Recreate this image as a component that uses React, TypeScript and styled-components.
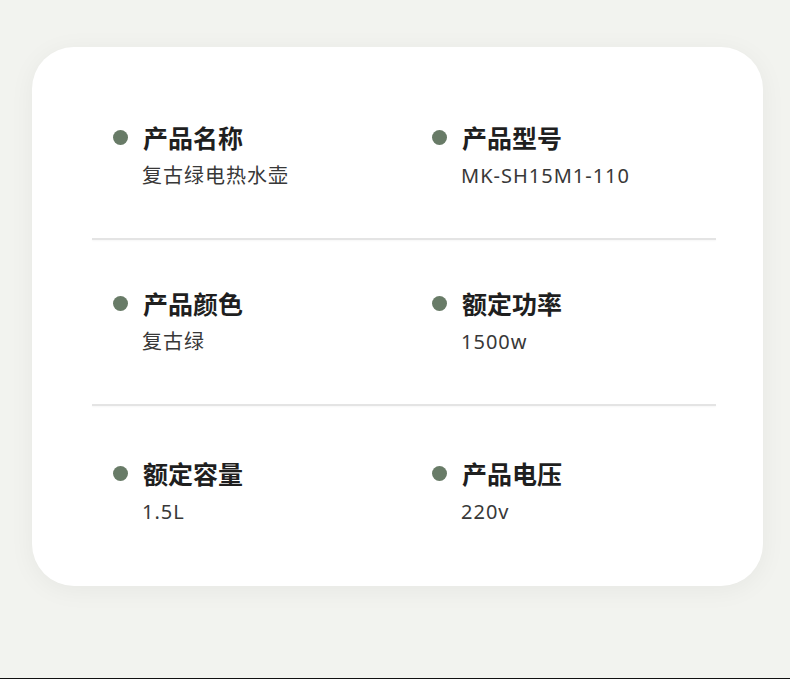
import React from "react";
import styled, { createGlobalStyle } from "styled-components";

const GlobalStyle = createGlobalStyle`
  * {
    box-sizing: border-box;
  }
  body {
    margin: 0;
    background-color: #f2f3ef;
    font-family: "Noto Sans CJK SC", "Noto Sans", sans-serif;
  }
`;

const Page = styled.div`
  height: 679px;
  padding: 47px 27px 0 32px;
  background-color: #f2f3ef;
  border-bottom: 1px solid #111;
`;

const Card = styled.div`
  width: 731px;
  height: 539px;
  padding: 0 47px 0 60px;
  background-color: #ffffff;
  border-radius: 42px;
  box-shadow: 0 4px 26px rgba(0, 0, 0, 0.05);
`;

const Row = styled.div<{ $top: number; $bottom: number }>`
  display: grid;
  grid-template-columns: 319px 1fr;
  padding: ${(p) => p.$top}px 0 ${(p) => p.$bottom}px 21px;
`;

const Divider = styled.div`
  height: 2px;
  background-color: #e4e4e4;
  box-shadow: 0 1px 2px rgba(0, 0, 0, 0.04);
`;

const Item = styled.div`
  display: flex;
  flex-direction: column;
  gap: 9px;
`;

const Head = styled.div`
  display: flex;
  align-items: center;
  gap: 15px;
`;

const Dot = styled.span`
  width: 15px;
  height: 15px;
  border-radius: 50%;
  background-color: #687b67;
  flex-shrink: 0;
`;

const Title = styled.h3`
  margin: 0;
  font-size: 25px;
  line-height: 32px;
  font-weight: 700;
  color: #1f1f1f;
`;

const Value = styled.div`
  padding-left: 29px;
  font-family: "Noto Sans", "Noto Sans CJK SC", sans-serif;
  font-size: 20px;
  line-height: 28px;
  letter-spacing: 1px;
  color: #383838;
`;

type Spec = { title: string; value: string };

const rows: { top: number; bottom: number; items: Spec[] }[] = [
  {
    top: 74,
    bottom: 48,
    items: [
      { title: "产品名称", value: "复古绿电热水壶" },
      { title: "产品型号", value: "MK-SH15M1-110" },
    ],
  },
  {
    top: 47,
    bottom: 48,
    items: [
      { title: "产品颜色", value: "复古绿" },
      { title: "额定功率", value: "1500w" },
    ],
  },
  {
    top: 51,
    bottom: 0,
    items: [
      { title: "额定容量", value: "1.5L" },
      { title: "产品电压", value: "220v" },
    ],
  },
];

export default function App() {
  return (
    <Page>
      <GlobalStyle />
      <Card>
        {rows.map((row, i) => (
          <React.Fragment key={i}>
            <Row $top={row.top} $bottom={row.bottom}>
              {row.items.map((item) => (
                <Item key={item.title}>
                  <Head>
                    <Dot />
                    <Title>{item.title}</Title>
                  </Head>
                  <Value>{item.value}</Value>
                </Item>
              ))}
            </Row>
            {i < rows.length - 1 && <Divider />}
          </React.Fragment>
        ))}
      </Card>
    </Page>
  );
}
